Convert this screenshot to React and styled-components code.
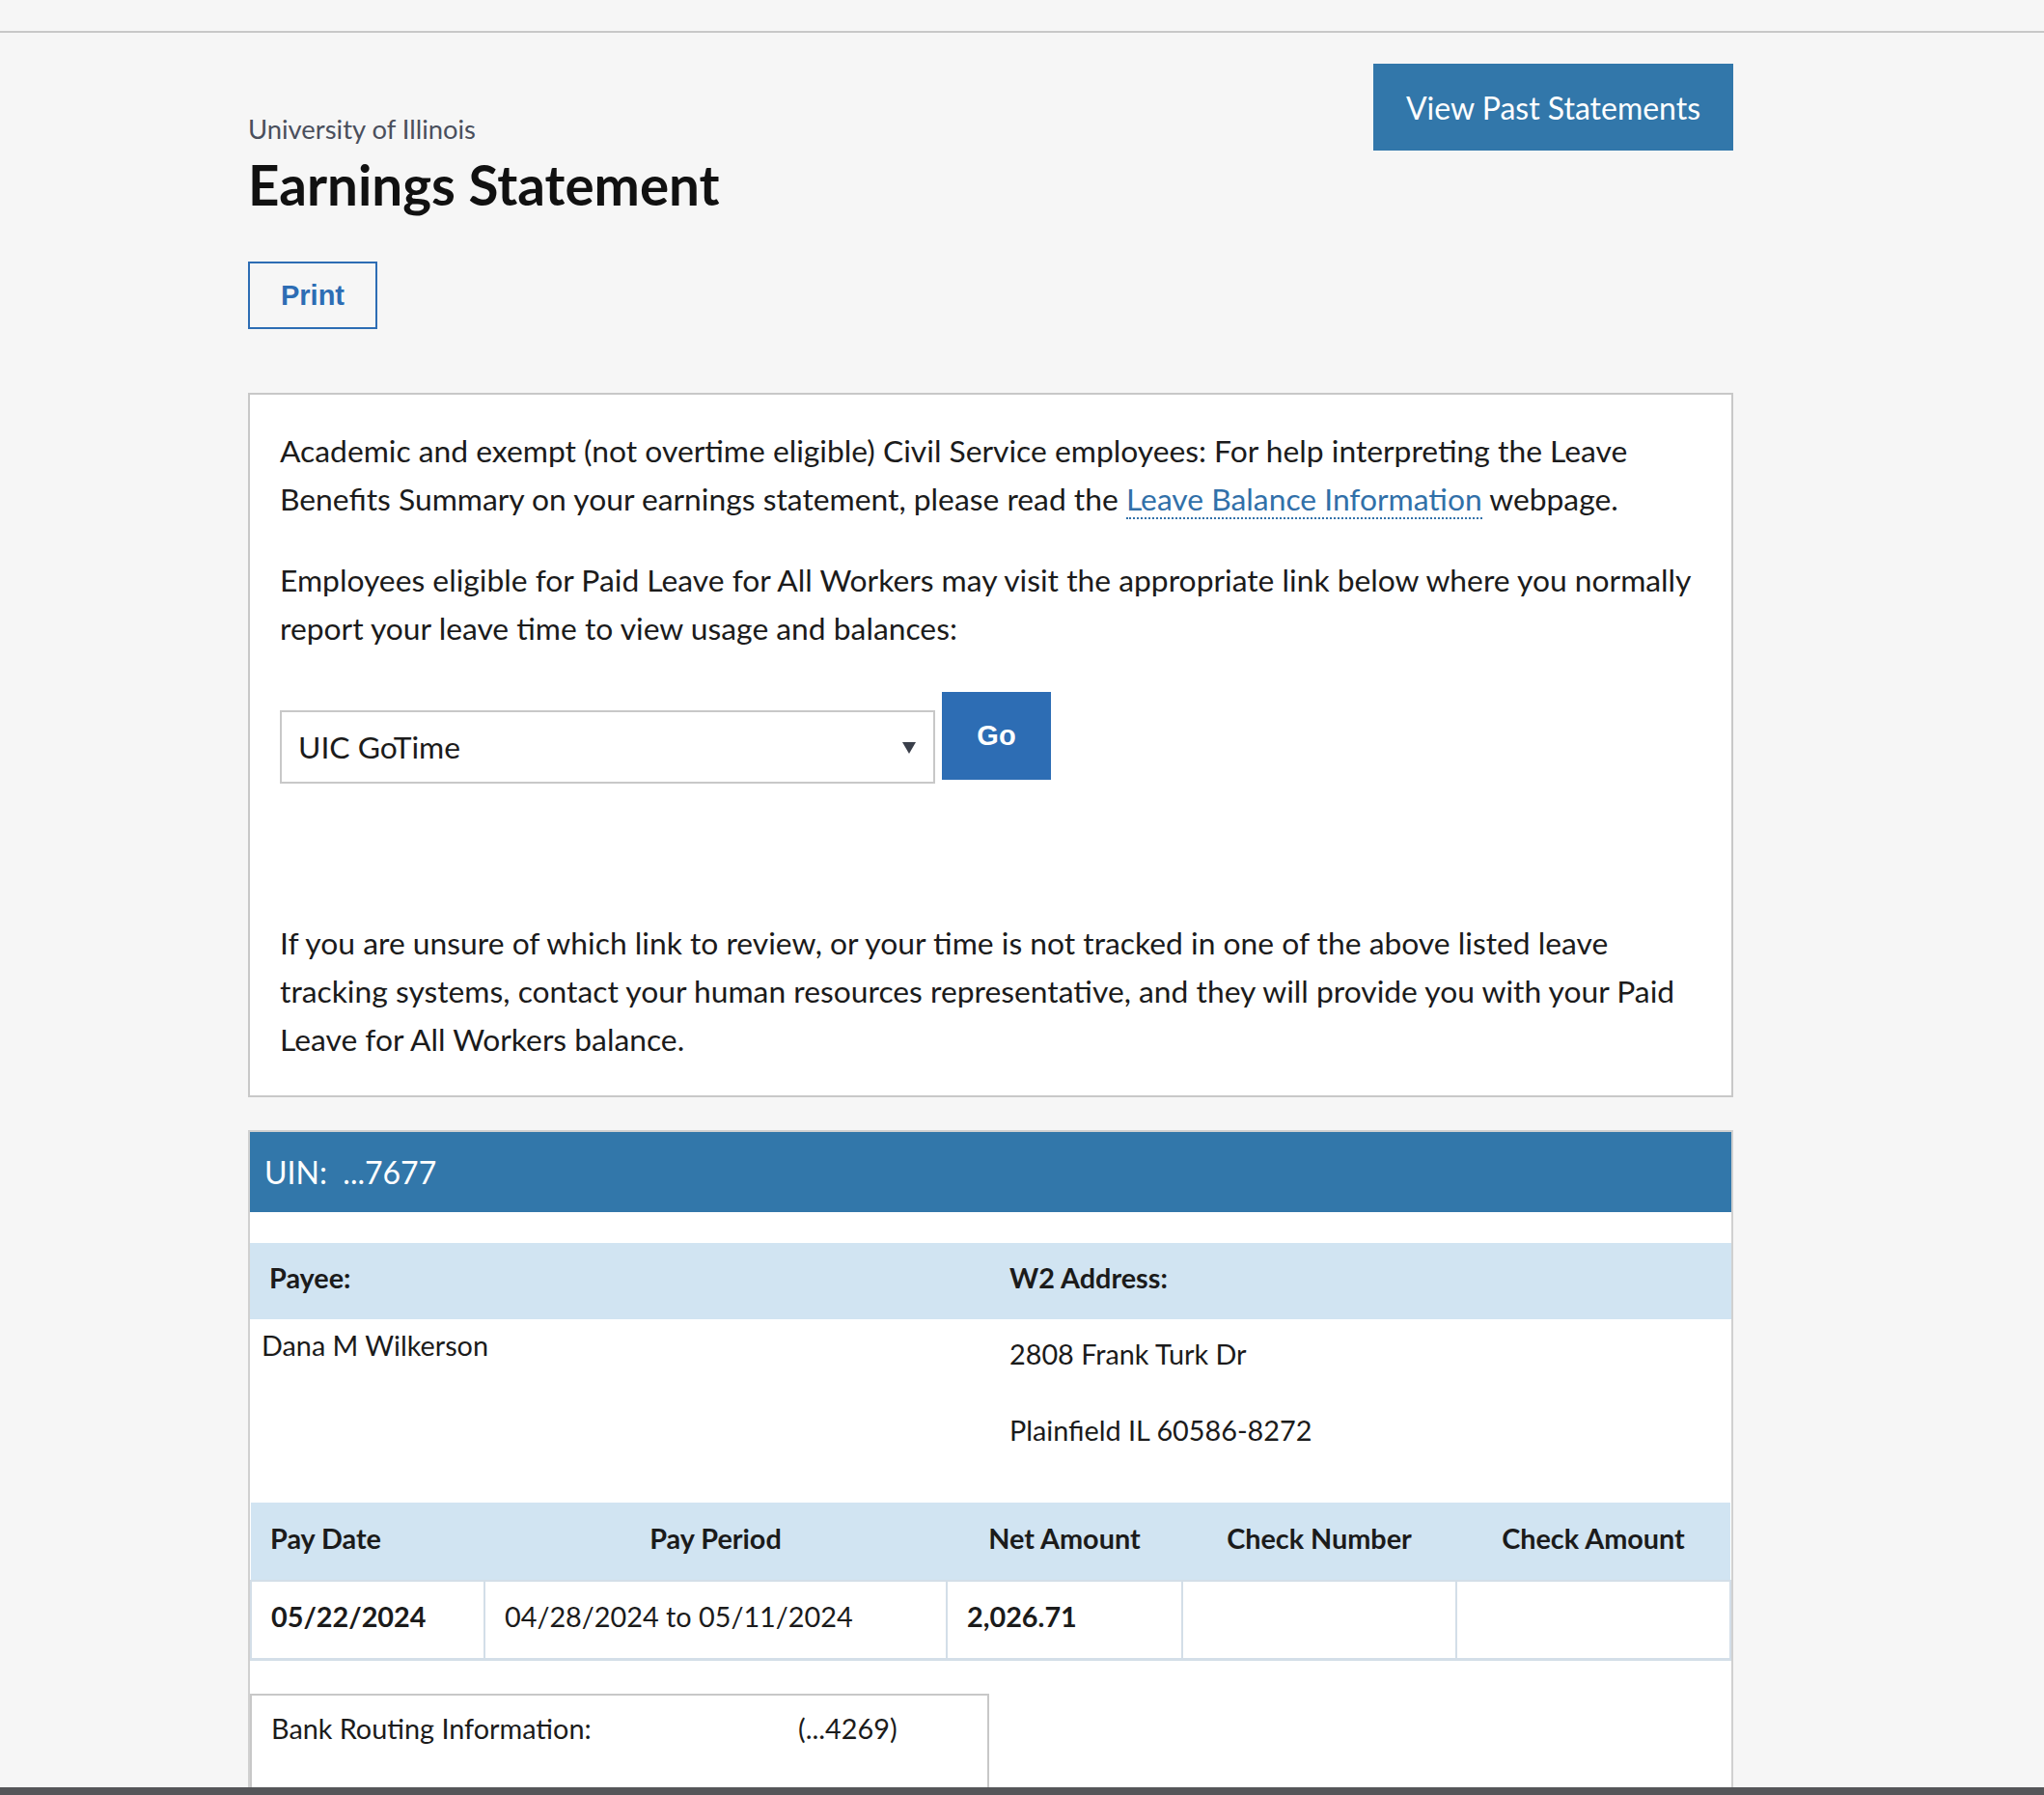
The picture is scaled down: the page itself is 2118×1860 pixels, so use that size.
import React from "react";
import styled, { createGlobalStyle } from "styled-components";

const GlobalStyle = createGlobalStyle`
  html, body {
    margin: 0;
    padding: 0;
    background: #f6f6f6;
  }
  body {
    font-family: Lato, "Noto Sans", sans-serif;
    color: #1b1b1b;
  }
  * { box-sizing: border-box; }
`;

/* page frame */
const Page = styled.div`
  height: 100vh;
  display: flex;
  flex-direction: column;
  overflow: hidden;
`;

const TopStrip = styled.div`
  flex-shrink: 0;
  height: 34px;
  border-bottom: 2px solid #c8c8c8;
`;

const Main = styled.main`
  flex: 1;
  overflow: hidden;
  padding-left: 257px;
`;

const Footer = styled.footer`
  flex-shrink: 0;
  height: 8px;
  background: #555659;
`;

const Container = styled.div`
  width: 1539px;
`;

/* header */
const HeaderRow = styled.div`
  display: flex;
  justify-content: space-between;
  align-items: flex-start;
`;

const TitleBlock = styled.div`
  padding-top: 83px;
`;

const Org = styled.div`
  font-size: 27.4px;
  line-height: 33px;
  color: #4a4f5c;
`;

const Heading = styled.h1`
  margin: 7px 0 0;
  font-size: 56.5px;
  line-height: 68px;
  font-weight: 700;
  color: #111;
`;

const PastButton = styled.button`
  margin-top: 32px;
  width: 373px;
  height: 90px;
  border: 0;
  background: #3277aa;
  color: #fff;
  font-family: Lato, sans-serif;
  font-size: 32px;
  cursor: pointer;
`;

const PrintButton = styled.button`
  margin-top: 46px;
  width: 134px;
  height: 70px;
  border: 2px solid #2d6db4;
  background: transparent;
  color: #2d6db4;
  font-family: "Liberation Sans", Arial, sans-serif;
  font-weight: 700;
  font-size: 29px;
  cursor: pointer;
`;

/* info box */
const InfoBox = styled.section`
  margin-top: 66px;
  background: #fff;
  border: 2px solid #c8c8c8;
  padding: 33px 32px 33px 31px;
`;

const Para = styled.p`
  margin: ${(p) => p.$top || 0}px 0 0;
  font-size: 31.8px;
  line-height: 50px;
`;

const LeaveLink = styled.a`
  color: #3170a9;
  text-decoration: none;
  border-bottom: 2px dotted #3170a9;
`;

const PickRow = styled.div`
  display: flex;
  align-items: flex-start;
  gap: 7px;
  margin-top: 41px;
`;

const SelectBox = styled.div`
  position: relative;
  margin-top: 19px;
  width: 679px;
  height: 76px;
  border: 2px solid #c8c8c8;
  background: #fff;
  display: flex;
  align-items: center;
  padding-left: 17px;
  font-size: 31.8px;
`;

const Caret = styled.span`
  position: absolute;
  right: 18px;
  top: 31px;
  width: 0;
  height: 0;
  border-left: 7px solid transparent;
  border-right: 7px solid transparent;
  border-top: 12px solid #3a3f4a;
`;

const GoButton = styled.button`
  width: 113px;
  height: 91px;
  border: 0;
  background: #2d6db4;
  color: #fff;
  font-family: "Liberation Sans", Arial, sans-serif;
  font-weight: 700;
  font-size: 29px;
  cursor: pointer;
`;

/* statement panel */
const Panel = styled.section`
  margin-top: 34px;
  background: #fff;
  border: 2px solid #d0d0d0;
  border-bottom: 0;
`;

const UinBar = styled.div`
  height: 83px;
  background: #3277aa;
  color: #fff;
  font-size: 32px;
  display: flex;
  align-items: center;
  padding-left: 15px;
`;

const TwoCol = styled.div`
  display: grid;
  grid-template-columns: 767px 1fr;
`;

const PayeeHead = styled(TwoCol)`
  margin-top: 32px;
  height: 79px;
  background: #d1e4f2;
  font-size: 28.8px;
  font-weight: 700;
  padding-top: 19px;

  & > div {
    padding-left: 20px;
  }
`;

const PayeeBody = styled(TwoCol)`
  font-size: 28.8px;
  padding-bottom: 58px;
`;

const Name = styled.div`
  padding: 10px 0 0 12px;
`;

const AddressLine = styled.div`
  padding-left: 20px;
  margin-top: ${(p) => p.$top}px;
`;

const PayTable = styled.table`
  width: 1533px;
  border-collapse: collapse;
  table-layout: fixed;
  font-size: 28.8px;
`;

const Th = styled.th`
  height: 81px;
  background: #d1e4f2;
  font-weight: 700;
  text-align: ${(p) => p.$align || "center"};
  padding: 0 20px 6px;
`;

const Td = styled.td`
  height: 81px;
  border: 2px solid #d3dee8;
  border-bottom-width: 3px;
  font-weight: ${(p) => (p.$bold ? 700 : 400)};
  padding: 0 20px 6px;
`;

const BankBox = styled.div`
  margin-top: 34px;
  width: 766px;
  height: 200px;
  border: 2px solid #c8c8c8;
  display: grid;
  grid-template-columns: 546px 1fr;
  align-content: start;
  padding: 17px 0 0 20px;
  font-size: 28.8px;
`;

const columns = [
  { label: "Pay Date", width: 242, align: "left" },
  { label: "Pay Period", width: 479 },
  { label: "Net Amount", width: 244 },
  { label: "Check Number", width: 284 },
  { label: "Check Amount", width: 284 },
];

export default function App() {
  return (
    <Page>
      <GlobalStyle />
      <TopStrip />
      <Main>
        <Container>
          <HeaderRow>
            <TitleBlock>
              <Org>University of Illinois</Org>
              <Heading>Earnings Statement</Heading>
            </TitleBlock>
            <PastButton>View Past Statements</PastButton>
          </HeaderRow>
          <PrintButton>Print</PrintButton>

          <InfoBox>
            <Para>
              Academic and exempt (not overtime eligible) Civil Service employees: For help
              interpreting the Leave Benefits Summary on your earnings statement, please read
              the <LeaveLink href="#">Leave Balance Information</LeaveLink> webpage.
            </Para>
            <Para $top={34}>
              Employees eligible for Paid Leave for All Workers may visit the appropriate link
              below where you normally report your leave time to view usage and balances:
            </Para>
            <PickRow>
              <SelectBox>
                UIC GoTime
                <Caret />
              </SelectBox>
              <GoButton>Go</GoButton>
            </PickRow>
            <Para $top={140}>
              If you are unsure of which link to review, or your time is not tracked in one of
              the above listed leave tracking systems, contact your human resources
              representative, and they will provide you with your Paid Leave for All Workers
              balance.
            </Para>
          </InfoBox>

          <Panel>
            <UinBar>UIN:{"\u00a0 "}...7677</UinBar>
            <PayeeHead>
              <div>Payee:</div>
              <div>W2 Address:</div>
            </PayeeHead>
            <PayeeBody>
              <Name>Dana M Wilkerson</Name>
              <div>
                <AddressLine $top={19}>2808 Frank Turk Dr</AddressLine>
                <AddressLine $top={45}>Plainfield IL 60586-8272</AddressLine>
              </div>
            </PayeeBody>
            <PayTable>
              <colgroup>
                {columns.map((c) => (
                  <col key={c.label} style={{ width: c.width }} />
                ))}
              </colgroup>
              <thead>
                <tr>
                  {columns.map((c) => (
                    <Th key={c.label} $align={c.align}>
                      {c.label}
                    </Th>
                  ))}
                </tr>
              </thead>
              <tbody>
                <tr>
                  <Td $bold>05/22/2024</Td>
                  <Td>04/28/2024 to 05/11/2024</Td>
                  <Td $bold>2,026.71</Td>
                  <Td />
                  <Td />
                </tr>
              </tbody>
            </PayTable>
            <BankBox>
              <span>Bank Routing Information:</span>
              <span>(...4269)</span>
            </BankBox>
          </Panel>
        </Container>
      </Main>
      <Footer />
    </Page>
  );
}
